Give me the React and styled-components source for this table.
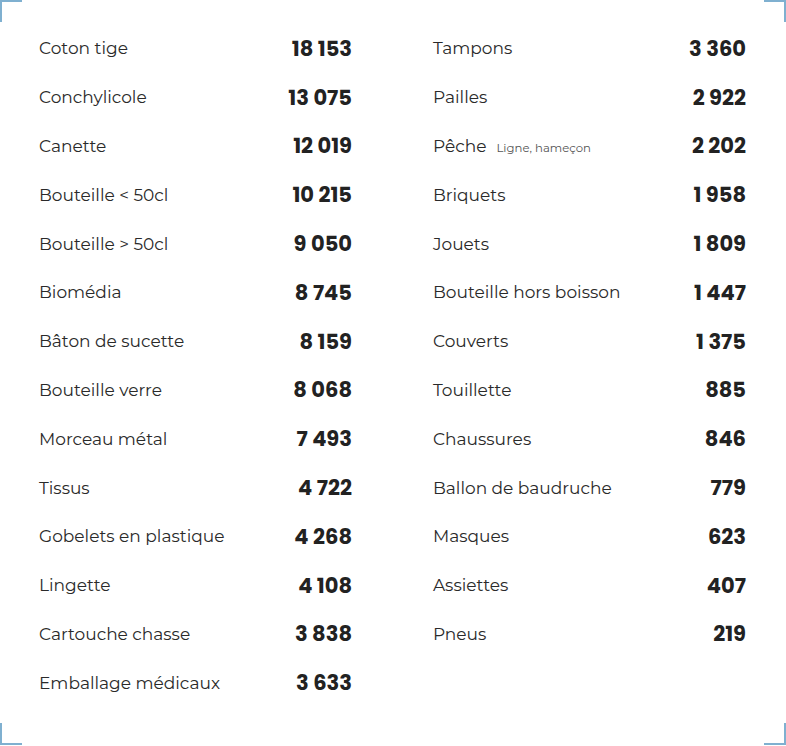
import React from 'react';
import styled, { createGlobalStyle } from 'styled-components';

const left = [
  ['Coton tige', '18 153'],
  ['Conchylicole', '13 075'],
  ['Canette', '12 019'],
  ['Bouteille < 50cl', '10 215'],
  ['Bouteille > 50cl', '9 050'],
  ['Biomédia', '8 745'],
  ['Bâton de sucette', '8 159'],
  ['Bouteille verre', '8 068'],
  ['Morceau métal', '7 493'],
  ['Tissus', '4 722'],
  ['Gobelets en plastique', '4 268'],
  ['Lingette', '4 108'],
  ['Cartouche chasse', '3 838'],
  ['Emballage médicaux', '3 633'],
];

const right = [
  ['Tampons', '3 360'],
  ['Pailles', '2 922'],
  ['Pêche', '2 202', 'Ligne, hameçon'],
  ['Briquets', '1 958'],
  ['Jouets', '1 809'],
  ['Bouteille hors boisson', '1 447'],
  ['Couverts', '1 375'],
  ['Touillette', '885'],
  ['Chaussures', '846'],
  ['Ballon de baudruche', '779'],
  ['Masques', '623'],
  ['Assiettes', '407'],
  ['Pneus', '219'],
];

const GlobalStyle = createGlobalStyle`
  body {
    margin: 0;
    background: #fff;
  }
`;

const Column = ({ items }) => (
  <List>
    {items.map(([label, value, note]) => (
      <Row key={label}>
        <Label>
          {label}
          {note && <Note>{note}</Note>}
        </Label>
        <Value>{value}</Value>
      </Row>
    ))}
  </List>
);

const App = () => {
  return (
    <>
      <GlobalStyle />
      <Wrapper>
        <Corner $v="top" $h="left" />
        <Corner $v="top" $h="right" />
        <Corner $v="bottom" $h="left" />
        <Corner $v="bottom" $h="right" />
        <Grid>
          <Column items={left} />
          <Column items={right} />
        </Grid>
      </Wrapper>
    </>
  );
};

const Wrapper = styled.section`
  position: relative;
  width: 786px;
  height: 745px;
  box-sizing: border-box;
  padding: 24px 40px 0 39px;
`;

const Corner = styled.span`
  position: absolute;
  width: 20px;
  height: 20px;
  ${({ $v }) => $v}: 0;
  ${({ $h }) => $h}: 0;
  border-${({ $v }) => $v}: 2px solid #7fb0d0;
  border-${({ $h }) => $h}: 2px solid #7fb0d0;
`;

const Grid = styled.div`
  display: grid;
  grid-template-columns: 313px 313px;
  column-gap: 81px;
`;

const List = styled.div`
  display: flex;
  flex-direction: column;
`;

const Row = styled.div`
  height: 48.8px;
  display: flex;
  align-items: center;
  justify-content: space-between;
`;

const Label = styled.span`
  font-family: 'Montserrat', 'Inter', 'Open Sans', sans-serif;
  font-size: 17px;
  color: #2a2a2a;
  display: flex;
  align-items: baseline;
`;

const Note = styled.span`
  font-size: 11.7px;
  color: #555;
  margin-left: 10px;
`;

const Value = styled.span`
  font-family: 'Poppins', 'Inter', 'DejaVu Sans', sans-serif;
  font-weight: 700;
  font-size: 21px;
  color: #222;
`;

export default App;
